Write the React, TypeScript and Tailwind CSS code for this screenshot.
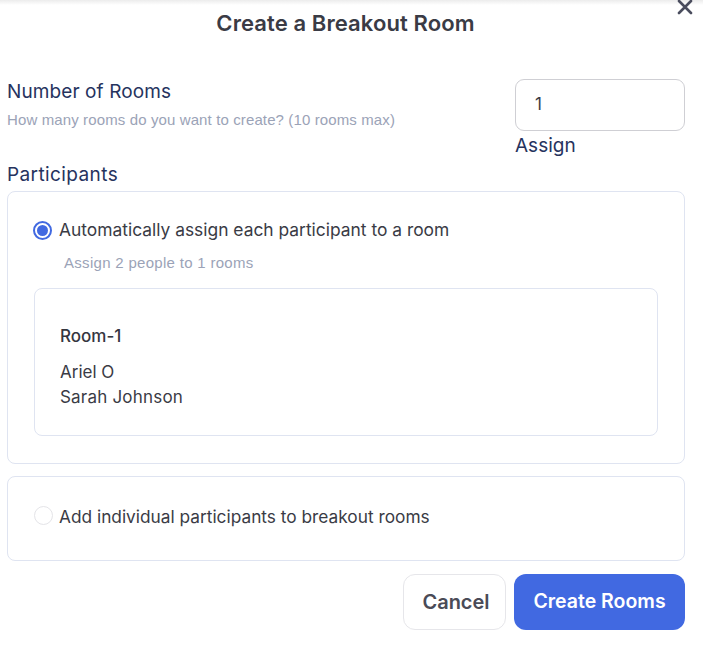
import React from "react";

export default function App() {
  const font = { fontFamily: "Inter, 'Noto Sans', sans-serif" };
  const sub = { fontFamily: "'Liberation Sans', Arial, sans-serif" };
  return (
    <div className="relative w-[703px] h-[659px] bg-white overflow-hidden" style={font}>
      <div className="absolute top-0 left-0 right-0 h-[5px] bg-gradient-to-b from-[#ececec] to-white" />
      <button className="absolute right-[9px] top-[-2px] text-[#4a4d5e]">
        <svg width="18" height="18" viewBox="0 0 18 18">
          <path d="M3 3 L15 15 M15 3 L3 15" stroke="#4a4d5e" strokeWidth="2.6" strokeLinecap="round" />
        </svg>
      </button>
      <div className="pt-[8px] pr-[12px] text-center text-[22px] font-semibold text-[#3a3b45] leading-[30px] tracking-[0.1px]">
        Create a Breakout Room
      </div>

      <div className="flex justify-between pl-[7px] pr-[18px] mt-[41px]">
        <div className="pt-[0px]">
          <div className="text-[19px] leading-[26px] text-[#26335e] tracking-[0.1px]">Number of Rooms</div>
          <div className="text-[15px] text-[#9ba3b7] leading-[18px] mt-[6px] tracking-[0.12px]" style={sub}>
            How many rooms do you want to create? (10 rooms max)
          </div>
        </div>
        <div className="w-[170px]">
          <div className="h-[52px] rounded-[9px] border border-[#cfcfd4] flex items-center pl-[19px] text-[17px] text-[#3a3b45]">
            1
          </div>
          <div className="text-[19px] leading-[24px] text-[#26335e] mt-[3px]">Assign</div>
        </div>
      </div>

      <div className="pl-[7px] pr-[18px]">
        <div className="text-[19px] leading-[24px] text-[#26335e] mt-[5px] tracking-[0.4px]">Participants</div>

        <div className="mt-[4px] h-[273px] rounded-[8px] border border-[#dfe4f1] pl-[25px] pr-[26px] pt-[26px]">
          <div className="flex items-center">
            <span className="w-[19px] h-[19px] rounded-full border-[2px] border-[#4169e1] flex items-center justify-center">
              <span className="w-[11px] h-[11px] rounded-full bg-[#4169e1]" />
            </span>
            <span className="ml-[7px] text-[17.4px] leading-[24px] text-[#3a3b45]">
              Automatically assign each participant to a room
            </span>
          </div>
          <div className="ml-[31px] mt-[12px] text-[15px] leading-[18px] text-[#9ba3b7] tracking-[0.3px]" style={sub}>
            Assign 2 people to 1 rooms
          </div>
          <div className="mt-[16px] ml-[1px] h-[148px] rounded-[8px] border border-[#dfe4f1] pl-[25px] pt-[36px]">
            <div className="text-[17px] leading-[22px] font-medium text-[#35363f]">Room-1</div>
            <div className="mt-[13px] text-[17px] leading-[25px] text-[#3a3b45]">Ariel O</div>
            <div className="text-[17px] leading-[25px] text-[#3a3b45] tracking-[0.2px]">Sarah Johnson</div>
          </div>
        </div>

        <div className="mt-[12px] h-[85px] rounded-[8px] border border-[#dfe4f1] pl-[26px] flex items-center">
          <span className="w-[19px] h-[19px] rounded-full border border-[#e4e4e8] mt-[-6px]" />
          <span className="ml-[6px] text-[17.3px] leading-[24px] text-[#3a3b45] mt-[-4px]">
            Add individual participants to breakout rooms
          </span>
        </div>

        <div className="flex justify-end gap-[8px] mt-[13px]">
          <button className="w-[103px] h-[56px] rounded-[12px] border border-[#e6e6ea] bg-white text-[20px] font-semibold text-[#4a4b57] pl-[3px]">
            Cancel
          </button>
          <button className="w-[171px] h-[56px] rounded-[12px] bg-[#4169e1] text-[19.5px] font-semibold text-white">
            Create Rooms
          </button>
        </div>
      </div>
    </div>
  );
}
